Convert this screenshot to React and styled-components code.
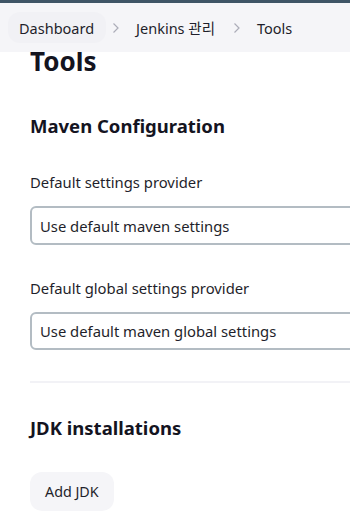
import React from "react";
import styled, { createGlobalStyle } from "styled-components";

const Global = createGlobalStyle`
  html, body { margin: 0; padding: 0; background: #fff; overflow: hidden; }
  body { font-family: "Noto Sans", "Noto Sans CJK KR", sans-serif; color: #1f1f2b; }
`;

const Page = styled.div`
  width: 350px;
  height: 526px;
  overflow: hidden;
  display: flex;
  flex-direction: column;
`;

const TopStrip = styled.div`
  height: 3px;
  background: #3f5566;
  flex: none;
`;

const Breadcrumbs = styled.nav`
  position: relative;
  z-index: 2;
  height: 49px;
  flex: none;
  background: #f5f5f8;
  display: flex;
  align-items: center;
  padding-left: 8px;
`;

const Crumb = styled.span`
  display: inline-flex;
  align-items: center;
  height: 31px;
  padding: 0 12px 0 11px;
  border-radius: 12px;
  background: ${(p) => (p.$active ? "#f1f1f5" : "transparent")};
  font-size: 14.5px;
  color: #1f1f2b;
  white-space: nowrap;
`;

const Sep = styled.span`
  display: inline-flex;
  align-items: center;
  width: 19px;
  justify-content: center;
  color: #acadb8;
`;

const Content = styled.main`
  padding-left: 30px;
  display: flex;
  flex-direction: column;
`;

const Title = styled.h1`
  margin: -6px 0 0;
  font-size: 26px;
  line-height: 1.2;
  font-weight: 700;
  color: #14141f;
`;

const SectionTitle = styled.h2`
  margin: ${(p) => p.$mt}px 0 0;
  font-size: 18.5px;
  line-height: 24px;
  font-weight: 700;
  color: #14141f;
`;

const Label = styled.div`
  margin-top: ${(p) => p.$mt}px;
  font-size: 14.8px;
  line-height: 20px;
  color: #1f1f2b;
`;

const Select = styled.div`
  margin-top: ${(p) => p.$mt}px;
  width: 400px;
  height: ${(p) => p.$h}px;
  box-sizing: border-box;
  border: 2px solid #b3bcc3;
  border-radius: 6px;
  display: flex;
  align-items: center;
  padding-left: 8px;
  font-size: 14.8px;
  color: #1f1f2b;
`;

const Divider = styled.hr`
  margin: 31px 0 0;
  border: none;
  height: 2px;
  background: #f2f2f6;
  width: 400px;
`;

const Button = styled.button`
  margin-top: 32px;
  align-self: flex-start;
  height: 39px;
  padding: 0 15px;
  border: none;
  border-radius: 12px;
  background: #f5f5f8;
  font-family: inherit;
  font-size: 14.3px;
  color: #1f1f2b;
`;

const Chevron = () => (
  <svg width="8" height="12" viewBox="0 0 8 12" fill="none">
    <path d="M1.5 1.5L6 6L1.5 10.5" stroke="currentColor" strokeWidth="1.2" />
  </svg>
);

export default function App() {
  return (
    <Page>
      <Global />
      <TopStrip />
      <Breadcrumbs>
        <Crumb $active>Dashboard</Crumb>
        <Sep><Chevron /></Sep>
        <Crumb>Jenkins 관리</Crumb>
        <Sep><Chevron /></Sep>
        <Crumb>Tools</Crumb>
      </Breadcrumbs>
      <Content>
        <Title>Tools</Title>
        <SectionTitle $mt={37}>Maven Configuration</SectionTitle>
        <Label $mt={34}>Default settings provider</Label>
        <Select $mt={14} $h={39}>Use default maven settings</Select>
        <Label $mt={33}>Default global settings provider</Label>
        <Select $mt={14} $h={38}>Use default maven global settings</Select>
        <Divider />
        <SectionTitle $mt={33}>JDK installations</SectionTitle>
        <Button>Add JDK</Button>
      </Content>
    </Page>
  );
}
